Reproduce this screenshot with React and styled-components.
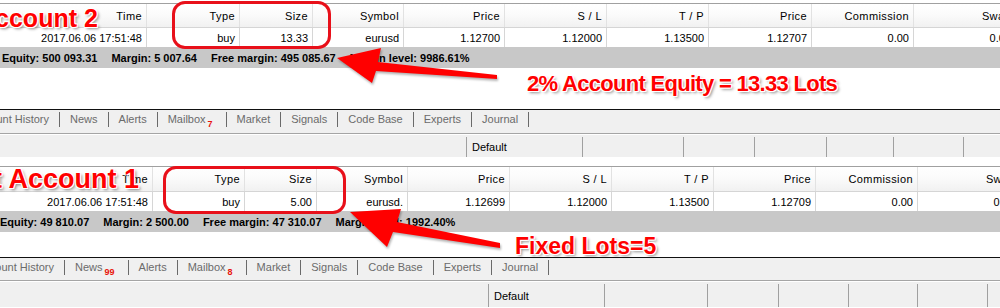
import React from 'react'
import styled, { createGlobalStyle } from 'styled-components'

const GlobalStyle = createGlobalStyle`
  html, body { margin: 0; padding: 0; background: #fff; }
  body { font-family: "Liberation Sans", Arial, sans-serif; font-size: 11px; color: #000; }
`

const HEADERS = ['Time', 'Type', 'Size', 'Symbol', 'Price', 'S / L', 'T / P', 'Price', 'Commission', 'Swap']

const accounts = [
  {
    cols: [147, 93, 73, 91, 101, 102, 102, 103, 102, 102],
    row: ['2017.06.06 17:51:48', 'buy', '13.33', 'eurusd', '1.12700', '1.12000', '1.13500', '1.12707', '0.00', '0.00'],
    equity: ['Equity: 500 093.31', 'Margin: 5 007.64', 'Free margin: 495 085.67', 'Margin level: 9986.61%'],
    eqIndent: 2,
    tabs: [['Account History'], ['News'], ['Alerts'], ['Mailbox', '7'], ['Market'], ['Signals'], ['Code Base'], ['Experts'], ['Journal']],
    tabShift: -38,
    status: { lead: 466, cells: [116, 101, 71, 72, 67, 70, 60] },
    dims: { top: 3, head: 23, blank: 41, tab: 24, tabPad: 4, status: 22, after: 9 },
  },
  {
    cols: [153, 92, 72, 91, 102, 102, 102, 102, 102, 102],
    row: ['2017.06.06 17:51:48', 'buy', '5.00', 'eurusd.', '1.12699', '1.12000', '1.13500', '1.12709', '0.00', '0.00'],
    equity: ['Equity: 49 810.07', 'Margin: 2 500.00', 'Free margin: 47 310.07', 'Margin level: 1992.40%'],
    eqIndent: -1,
    tabs: [['Account History'], ['News', '99'], ['Alerts'], ['Mailbox', '8'], ['Market'], ['Signals'], ['Code Base'], ['Experts'], ['Journal']],
    tabShift: -33,
    status: { lead: 488, cells: [116, 103, 71, 70, 69, 70, 40] },
    dims: { top: 0, head: 24, blank: 25, tab: 23, tabPad: 3, status: 25, after: 0 },
  },
]

export default function App() {
  return (
    <>
      <GlobalStyle />
      <Page>
        {accounts.map((a, i) => (
          <Terminal key={i} data={a} />
        ))}

        <Ring $x={172} $y={1} $w={159} $h={48} />
        <Ring $x={163} $y={166} $w={183} $h={48} />

        <ArrowLayer viewBox="0 0 1000 308">
          <polygon points="337,58 381,48 378,62 497,75 497,79 376,71 372,83" />
          <polygon points="350,212 401,209 397,222 500,243 500,248 393,232 387,247" />
        </ArrowLayer>

        <Callout $x={-23} $y={6} $size={25}>Account 2</Callout>
        <Callout $x={-7} $y={166} $size={27}>t Account 1</Callout>
        <Callout $x={527} $y={73} $size={22} $ls={-0.7}>2% Account Equity = 13.33 Lots</Callout>
        <Callout $x={515} $y={235} $size={23}>Fixed Lots=5</Callout>
      </Page>
    </>
  )
}

function Terminal({ data }) {
  const { cols, row, equity, eqIndent, tabs, tabShift, status, dims } = data
  return (
    <Panel $top={dims.top} $after={dims.after}>
      <HeaderRow $h={dims.head}>
        {HEADERS.map((h, i) => (
          <HeadCell key={i} $w={cols[i]}>{h}</HeadCell>
        ))}
      </HeaderRow>
      <DataRow>
        {row.map((v, i) => (
          <DataCell key={i} $w={cols[i]}>{v}</DataCell>
        ))}
      </DataRow>
      <EquityBar $indent={eqIndent}>
        {equity.map((e, i) => (
          <span key={i}>{e}</span>
        ))}
      </EquityBar>
      <Blank $h={dims.blank} />
      <TabBar $h={dims.tab} $pad={dims.tabPad}>
        <TabStrip $shift={tabShift}>
          {tabs.map(([label, badge], i) => (
            <Tab key={i}>
              {label}
              {badge && <Badge>{badge}</Badge>}
            </Tab>
          ))}
        </TabStrip>
      </TabBar>
      <Divider />
      <StatusBar $h={dims.status}>
        <StatusLead $w={status.lead} />
        {status.cells.map((w, i) => (
          <StatusCell key={i} $w={w}>{i === 0 ? 'Default' : ''}</StatusCell>
        ))}
      </StatusBar>
    </Panel>
  )
}

const Page = styled.div`
  position: relative;
  width: 1000px;
  height: 308px;
  overflow: hidden;
  background: #fff;
`

const Panel = styled.section`
  display: flex;
  flex-direction: column;
  padding-top: ${p => p.$top}px;
  padding-bottom: ${p => p.$after}px;
`

const HeaderRow = styled.div`
  display: flex;
  height: ${p => p.$h}px;
  border-top: 1px solid #a0a0a0;
  border-bottom: 1px solid #d5d5d5;
  background: linear-gradient(#ffffff 0%, #fbfbfb 45%, #f1f1f1 100%);
`

const Cell = styled.div`
  flex: none;
  box-sizing: border-box;
  width: ${p => p.$w}px;
  padding-right: 4px;
  display: flex;
  align-items: center;
  justify-content: flex-end;
  white-space: nowrap;
`

const HeadCell = styled(Cell)`
  border-right: 1px solid #e2e2e2;
  letter-spacing: 0.4px;
`

const DataRow = styled.div`
  display: flex;
  height: 19px;
  background: #fff;
`

const DataCell = styled(Cell)`
  border-right: 1px solid #d6d6d6;
`

const EquityBar = styled.div`
  display: flex;
  align-items: center;
  gap: 14px;
  height: 21px;
  padding-left: ${p => p.$indent}px;
  background: #c8c8c8;
  font-weight: bold;
  white-space: nowrap;
`

const Blank = styled.div`
  height: ${p => p.$h}px;
  background: #fff;
`

const TabBar = styled.div`
  display: flex;
  align-items: center;
  box-sizing: border-box;
  height: ${p => p.$h}px;
  padding-bottom: ${p => p.$pad}px;
  border-top: 1px solid #111;
  background: #f0f0f0;
  overflow: hidden;
`

const TabStrip = styled.div`
  display: flex;
  align-items: center;
  margin-left: ${p => p.$shift}px;
`

const Tab = styled.div`
  flex: none;
  height: 15px;
  line-height: 15px;
  padding: 0 10px;
  border-right: 1px solid #6a6a6a;
  color: #6b6b6b;
  white-space: nowrap;
`

const Badge = styled.sub`
  margin: 0 3px 0 2px;
  color: #e8140c;
  font-size: 9px;
  font-weight: bold;
  vertical-align: -4px;
`

const Divider = styled.div`
  height: 0;
  border-top: 1px solid #a5a5a5;
  border-bottom: 1px solid #fff;
`

const StatusBar = styled.div`
  display: flex;
  height: ${p => p.$h}px;
  background: #f0f0f0;
`

const StatusLead = styled.div`
  flex: none;
  width: ${p => p.$w}px;
`

const StatusCell = styled.div`
  flex: none;
  box-sizing: border-box;
  width: ${p => p.$w}px;
  margin: 2px 0 0;
  padding-left: 5px;
  border-left: 1px solid #a0a0a0;
  display: flex;
  align-items: center;
  white-space: nowrap;
`

const Ring = styled.div`
  position: absolute;
  left: ${p => p.$x}px;
  top: ${p => p.$y}px;
  width: ${p => p.$w}px;
  height: ${p => p.$h}px;
  box-sizing: border-box;
  border: 3px solid #e8101a;
  border-radius: 13px;
`

const ArrowLayer = styled.svg`
  position: absolute;
  left: 0;
  top: 0;
  width: 1000px;
  height: 308px;
  pointer-events: none;
  fill: #ff0000;
  filter: drop-shadow(1px 2px 1px rgba(0, 0, 0, 0.3));
`

const Callout = styled.div`
  position: absolute;
  left: ${p => p.$x}px;
  top: ${p => p.$y}px;
  font-family: "Liberation Sans", Arial, sans-serif;
  font-weight: bold;
  font-size: ${p => p.$size}px;
  line-height: 1;
  letter-spacing: ${p => p.$ls || 0}px;
  color: #ff0000;
  white-space: nowrap;
  text-shadow:
    -1px -1px 0 #fff, 1px -1px 0 #fff, -1px 1px 0 #fff, 1px 1px 0 #fff,
    2px 2px 3px rgba(0, 0, 0, 0.45);
`
